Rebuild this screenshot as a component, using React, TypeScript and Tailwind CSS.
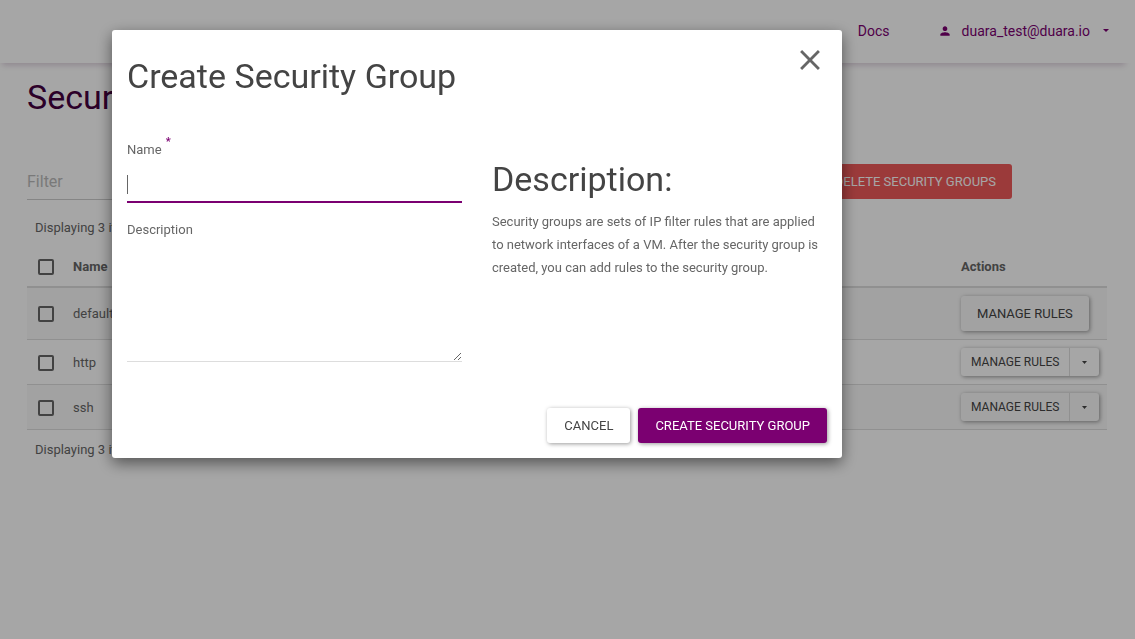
import { MdPerson, MdClose } from "react-icons/md";

const Caret = ({ small = false }: { small?: boolean }) => (
  <svg
    width={small ? 5 : 6}
    height="3"
    viewBox="0 0 6 3"
    preserveAspectRatio="none"
    fill="currentColor"
    aria-hidden="true"
  >
    <path d="M0 0h6L3 3z" />
  </svg>
);

const raised = "shadow-[1px_1px_4px_rgba(0,0,0,0.4)]";

const groups = [
  { name: "default", menu: false },
  { name: "http", menu: true },
  { name: "ssh", menu: true },
];

function Check({ label }: { label: string }) {
  return (
    <input
      type="checkbox"
      aria-label={label}
      className="mt-px block size-4 appearance-none rounded-xs border-2 border-[#666] checked:bg-[#7b0071]"
    />
  );
}

function GroupRow({ name, menu }: { name: string; menu: boolean }) {
  return (
    <tr className="border-b border-[#ddd] odd:bg-[#f9f9f9]">
      <td className="py-2 pl-[11px]">
        <Check label={`Select ${name}`} />
      </td>
      <td className="p-2">{name}</td>
      <td className="p-2">
        {menu ? (
          <div className={`inline-flex rounded-[3px] align-top text-xs text-[#444] ${raised}`}>
            <button type="button" className="h-7 px-[10px] whitespace-nowrap uppercase">
              Manage Rules
            </button>
            <button
              type="button"
              aria-label={`More actions for ${name}`}
              className="flex h-7 w-[30px] items-center justify-center border-l border-[#ddd]"
            >
              <Caret small />
            </button>
          </div>
        ) : (
          <button
            type="button"
            className={`block h-[35px] rounded-[3px] px-4 whitespace-nowrap text-[#444] uppercase ${raised}`}
          >
            Manage Rules
          </button>
        )}
      </td>
    </tr>
  );
}

function Page() {
  return (
    <>
      <header className="flex h-[63px] items-center justify-end gap-12 bg-white pr-[26px] pb-[2px] text-sm text-[#7b0071] shadow-[-4px_8px_6px_-6px_rgba(68,0,63,0.2)]">
        <a href="#docs">Docs</a>
        <button type="button" className="flex items-center gap-[13px]">
          <span className="flex items-center gap-[10px]">
            <MdPerson size={14} />
            duara_test@duara.io
          </span>
          <Caret />
        </button>
      </header>
      <main className="pt-3 pr-7 pl-[27px]">
        <h1 className="text-[34px] leading-11 text-[#44003f]">Security Groups</h1>
        <div className="mt-[43px] flex items-start justify-between pr-[95px]">
          <input
            aria-label="Filter"
            placeholder="Filter"
            className="h-[38px] w-52 border-b border-[#ccc] pt-px text-base outline-none placeholder:text-[#bbb]"
          />
          <button
            type="button"
            className="mt-[2px] h-[35px] rounded-[3px] bg-[#ee5a5a] px-4 text-white uppercase"
          >
            Delete Security Groups
          </button>
        </div>
        <p className="mt-2 p-2">Displaying 3 items</p>
        <table className="w-full table-fixed border-collapse text-left">
          <colgroup>
            <col className="w-[38px]" />
            <col />
            <col className="w-[154px]" />
          </colgroup>
          <thead>
            <tr className="border-b-2 border-[#ddd]">
              <th className="py-2 pl-[11px]">
                <Check label="Select all" />
              </th>
              <th className="p-2 font-bold">Name</th>
              <th className="p-2 font-bold">Actions</th>
            </tr>
          </thead>
          <tbody>
            {groups.map((g) => (
              <GroupRow key={g.name} {...g} />
            ))}
          </tbody>
        </table>
        <p className="p-2">Displaying 3 items</p>
      </main>
    </>
  );
}

function CreateDialog() {
  return (
    <div className="fixed inset-0 flex items-start justify-center bg-black/35 pt-[30px] pr-[181px]">
      <form
        role="dialog"
        aria-labelledby="dialog-title"
        className="w-full max-w-[730px] rounded-[3px] bg-white shadow-[0_5px_15px_rgba(0,0,0,0.5)]"
      >
        <div className="flex items-start justify-between px-[15px] pt-[13px]">
          <h2 id="dialog-title" className="pt-[10px] text-[34px] leading-[46px] text-[#444]">
            Create Security Group
          </h2>
          <button type="button" aria-label="Close">
            <MdClose size={34} />
          </button>
        </div>
        <div className="grid grid-cols-2 gap-[30px] px-[15px] pt-[39px]">
          <div>
            <label htmlFor="name" className="flex gap-1">
              Name
              <span className="-mt-2 text-[11px] font-bold text-[#7b0071]">*</span>
            </label>
            <div className="relative mt-[5px]">
              <input
                id="name"
                autoFocus
                required
                className="peer block h-[37px] w-full border-b-2 border-[#7b0071] text-base caret-transparent outline-none"
              />
              <span className="pointer-events-none absolute top-[9px] left-0 h-[19px] w-px bg-[#666] peer-valid:hidden" />
            </div>
            <label htmlFor="description" className="mt-[15px] block">
              Description
            </label>
            <textarea
              id="description"
              className="block h-[121px] w-full resize border-b border-[#ddd] text-base outline-none"
            />
          </div>
          <div className="pt-[18px]">
            <h3 className="text-[34px] leading-[46px] text-[#444]">Description:</h3>
            <p className="mt-2">
              Security groups are sets of IP filter rules that are applied to network interfaces of a
              VM. After the security group is created, you can add rules to the security group.
            </p>
          </div>
        </div>
        <div className="flex justify-end gap-2 px-[15px] pt-[46px] pb-[15px]">
          <button
            type="button"
            className={`h-[35px] rounded-[3px] px-[17px] text-[#444] uppercase ${raised}`}
          >
            Cancel
          </button>
          <button
            type="submit"
            className={`h-[35px] rounded-[3px] bg-[#7b0071] px-[17px] text-white uppercase ${raised}`}
          >
            Create Security Group
          </button>
        </div>
      </form>
    </div>
  );
}

export default function App() {
  return (
    <div className="min-h-screen bg-white font-[Roboto,sans-serif] text-[13px] leading-[23px] text-[#666]">
      <Page />
      <CreateDialog />
    </div>
  );
}
